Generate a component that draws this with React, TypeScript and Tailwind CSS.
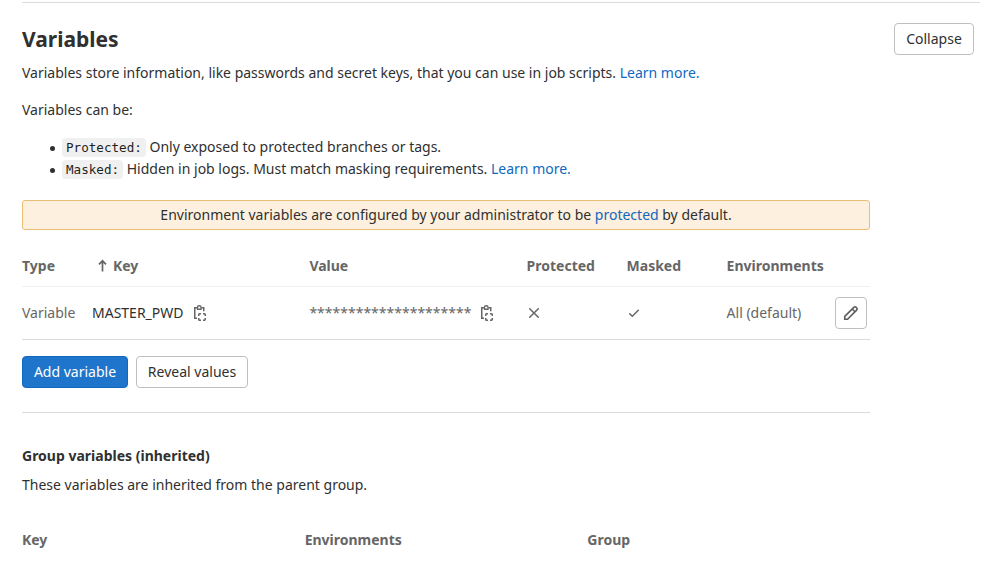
const Copy = () => (
  <svg width="16" height="16" viewBox="0 0 16 16" fill="none" stroke="#666" strokeWidth="1.5">
    <path d="M5 2.750H2.750v10.500H5M9.250 2.750h2.500v3.500" />
    <path d="M5.500 4.250V2.250a1.500 1.500 0 0 1 1.500-1.500h.500a1.500 1.500 0 0 1 1.500 1.500v2H5.500Z" strokeWidth="1.300" />
    <path d="M6.750 11V9.500a.75.75 0 0 1 .75-.75H9M11 8.750h1.500a.75.75 0 0 1 .75.75V11M13.250 13v1.500a.75.75 0 0 1-.75.75H11M9 15.250H7.500a.75.75 0 0 1-.75-.75V13" />
  </svg>
);

const Pencil = () => (
  <svg width="16" height="16" viewBox="0 0 16 16" fill="none" stroke="#5e5e5e" strokeWidth="1.600">
    <path d="M1.750 14.250v-2.800l9.100-9.100a1.650 1.650 0 0 1 2.330 0l.470.470a1.650 1.650 0 0 1 0 2.330l-9.100 9.100h-2.800ZM9.200 4l2.800 2.800" />
  </svg>
);

const Link = ({ children }: { children: string }) => <a className="text-[#1068bf]">{children}</a>;

const Bullet = () => <span className="mr-[7px] mt-[10px] size-[5px] shrink-0 rounded-full bg-[#303030]" />;

const code = "inline-block h-[19px] rounded bg-[#f0f0f0] px-1 align-baseline font-['DejaVu_Sans_Mono',monospace] text-[12.6px] leading-[19px] text-[#1f1f1f]";
const button = "flex h-8 items-center justify-center rounded border border-[#bfbfbf] bg-white";
const columns = "grid grid-cols-[70px_217.4px_217.2px_100px_100px_143.4px] items-center";

export default function App() {
  return (
    <div className="h-[579px] w-[987px] overflow-hidden bg-white pl-[22px] pt-0.5 font-['Noto_Sans',sans-serif] text-[14px] leading-5 text-[#303030]">
      <div className="w-[958px] border-t border-[#dbdbdb]">
        <header className="flex h-[60px] items-start justify-between pr-1.5 pt-5">
          <h2 className="pt-0.5 text-[21px] font-bold leading-7">Variables</h2>
          <button className={`${button} w-20`}>Collapse</button>
        </header>
        <p>Variables store information, like passwords and secret keys, that you can use in job scripts. <Link>Learn more.</Link></p>
        <p className="mt-[17px]">Variables can be:</p>
        <ul className="mt-4 pl-7 leading-[22px]">
          <li className="flex"><Bullet /><span><code className={code}>Protected:</code> Only exposed to protected branches or tags.</span></li>
          <li className="flex"><Bullet /><span><code className={code}>Masked:</code> Hidden in job logs. Must match masking requirements. <Link>Learn more.</Link></span></li>
        </ul>
      </div>
      <main className="w-[848px]">
        <div className="mt-5 flex h-[30px] items-center justify-center rounded-[3px] border border-[#e9be74] bg-[#fdf0de]">
          <p>Environment variables are configured by your administrator to be <Link>protected</Link> by default.</p>
        </div>
        <div className="border-b border-[#dbdbdb] text-[#666]">
          <div className={`${columns} h-[57px] border-b border-[#f0f0f0] pt-4 font-bold`}>
            <span>Type</span>
            <span className="flex items-center gap-[5px] pl-1">
              <svg width="12" height="16" viewBox="0 0 12 16" fill="none" stroke="currentColor" strokeWidth="1.700"><path d="M6.500 13.500V3M3 6.300l3.500-3.500L10 6.300" /></svg>
              Key
            </span>
            <span>Value</span>
            <span>Protected</span>
            <span>Masked</span>
            <span>Environments</span>
          </div>
          <div className={`${columns} h-[52px]`}>
            <span>Variable</span>
            <span className="flex items-center gap-2 text-[#303030]">MASTER_PWD <Copy /></span>
            <span className="flex items-center gap-2">********************* <Copy /></span>
            <svg className="-ml-[0.6px]" width="16" height="16" viewBox="0 0 16 16" fill="none" stroke="#666" strokeWidth="1.500" strokeLinecap="round"><path d="m3.700 3.700 8.600 8.600M12.300 3.700l-8.600 8.600" /></svg>
            <svg className="-ml-[0.6px]" width="16" height="16" viewBox="0 0 16 16" fill="none" stroke="#666" strokeWidth="1.500" strokeLinecap="round"><path d="m3.700 8.700 2.600 2.600 6-6" /></svg>
            <span className="flex items-center justify-between pr-[3px]">All (default)<button className={`${button} w-8`}><Pencil /></button></span>
          </div>
        </div>
        <div className="mt-4 flex gap-2 border-b border-[#dbdbdb] pb-6">
          <button className="h-8 w-[106px] rounded border border-[#1068bf] bg-[#1f75cb] text-white">Add variable</button>
          <button className={`${button} w-28`}>Reveal values</button>
        </div>
        <h3 className="mt-[33px] font-bold">Group variables (inherited)</h3>
        <p className="mt-[9px]">These variables are inherited from the parent group.</p>
        <div className="mt-[35px] grid grid-cols-3 font-bold text-[#666]"><span>Key</span><span>Environments</span><span>Group</span></div>
      </main>
    </div>
  );
}
